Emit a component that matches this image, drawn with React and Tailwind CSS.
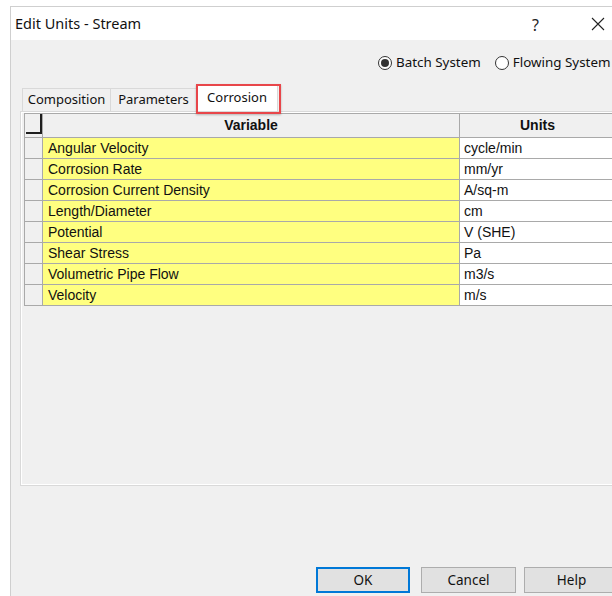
const ui = { fontFamily: '"Noto Sans", "Open Sans", sans-serif' };
const grid = { fontFamily: '"Liberation Sans", Arial, sans-serif' };

const rows = [
  ["Angular Velocity", "cycle/min"],
  ["Corrosion Rate", "mm/yr"],
  ["Corrosion Current Density", "A/sq-m"],
  ["Length/Diameter", "cm"],
  ["Potential", "V (SHE)"],
  ["Shear Stress", "Pa"],
  ["Volumetric Pipe Flow", "m3/s"],
  ["Velocity", "m/s"],
];

function Radio({ checked, label }) {
  return (
    <div className="flex items-center gap-[4px]">
      <span className="w-[14px] h-[14px] rounded-full border border-[#333] bg-white flex items-center justify-center">
        {checked && <span className="w-[8px] h-[8px] rounded-full bg-[#333]" />}
      </span>
      <span className="text-[13.4px] text-[#111] leading-none whitespace-nowrap">{label}</span>
    </div>
  );
}

function Tab({ label, width, selected }) {
  return (
    <div
      className={
        selected
          ? "h-[26px] bg-white border-t border-l border-r border-[#d9d9d9] flex items-start justify-center pt-[2px] text-[13px] text-[#111]"
          : "h-[23px] bg-[#f0f0f0] border-t border-l border-r border-[#d9d9d9] flex items-center justify-center text-[13px] text-[#111] -mr-[1px]"
      }
      style={{ width }}
    >
      {label}
    </div>
  );
}

export default function App() {
  return (
    <div className="w-[612px] h-[596px] overflow-hidden bg-white pt-[6px] pl-[10px]" style={ui}>
      <div className="w-[680px] h-[640px] border-l border-t border-[#cfcfcf] flex flex-col">
        {/* title bar */}
        <div className="h-[33px] bg-white flex items-center pl-[4px] relative shrink-0">
          <span className="text-[14.5px] text-[#111]">Edit Units - Stream</span>
          <span className="absolute left-[521px] top-[6px] text-[16px] text-[#222]">?</span>
          <svg className="absolute left-[580px] top-[10px]" width="14" height="14" viewBox="0 0 14 14">
            <path d="M1 1 L13 13 M13 1 L1 13" stroke="#222" strokeWidth="1.1" fill="none" />
          </svg>
        </div>

        {/* dialog body */}
        <div className="flex-1 bg-[#f0f0f0] flex flex-col">
          <div className="h-[20px] mt-[13px] flex items-center pl-[367px] gap-[14px]">
            <Radio checked label="Batch System" />
            <Radio label="Flowing System" />
          </div>

          {/* tab strip */}
          <div className="relative mt-[12px] h-[26px] flex items-end pl-[11px]">
            <Tab label="Composition" width={89} />
            <Tab label="Parameters" width={87} />
            <Tab label="Corrosion" width={82} selected />
            <div className="absolute left-[185px] top-[-1px] w-[85px] h-[30px] border-2 border-[#e8464a] shadow-[0_1px_2px_rgba(0,0,0,0.25)] pointer-events-none" />
          </div>

          {/* tab page */}
          <div className="ml-[9px] h-[375px] border border-[#d9d9d9] shadow-[inset_1px_1px_0_#ffffff,inset_-1px_-1px_0_#ffffff] pt-[1px] pl-[3px]">
            <div className="border-l border-t border-[#a9a9a9] bg-[#f0f0f0]" style={grid}>
              {/* header */}
              <div className="flex h-[24px]">
                <div className="relative w-[18px] border-r border-b border-[#a9a9a9] bg-[#f0f0f0] shrink-0">
                  <div className="absolute left-[1px] right-[0px] top-0 bottom-[3px] border-r-2 border-b-2 border-[#1e1e1e]" />
                </div>
                <div className="w-[417px] border-r border-b border-[#a9a9a9] bg-[#f0f0f0] flex items-center justify-center text-[14px] font-bold text-[#111] shrink-0">
                  Variable
                </div>
                <div className="w-[200px] border-b border-[#a9a9a9] bg-[#f0f0f0] flex items-center justify-center text-[14px] font-bold text-[#111] shrink-0 pr-[45px]">
                  Units
                </div>
              </div>
              {rows.map(([name, unit]) => (
                <div key={name} className="flex h-[21px]">
                  <div className="w-[18px] border-r border-b border-[#a9a9a9] bg-[#f0f0f0] shrink-0" />
                  <div className="w-[417px] border-r border-b border-[#a9a9a9] bg-[#ffff80] flex items-center pl-[5px] text-[14px] text-[#111] shrink-0">
                    {name}
                  </div>
                  <div className="w-[200px] border-b border-[#a9a9a9] bg-white flex items-center pl-[4px] text-[14px] text-[#111] shrink-0">
                    {unit}
                  </div>
                </div>
              ))}
            </div>
          </div>

          {/* buttons */}
          <div className="mt-[81px] flex items-center pl-[305px] text-[13.5px] text-[#111]">
            <button className="w-[94px] h-[26px] bg-[#e1e1e1] border-2 border-[#0078d7] flex items-center justify-center">OK</button>
            <button className="ml-[11px] w-[95px] h-[26px] bg-[#e1e1e1] border border-[#adadad] flex items-center justify-center">Cancel</button>
            <button className="ml-[8px] w-[95px] h-[26px] bg-[#e1e1e1] border border-[#adadad] flex items-center justify-center shrink-0">Help</button>
          </div>
        </div>
      </div>
    </div>
  );
}
